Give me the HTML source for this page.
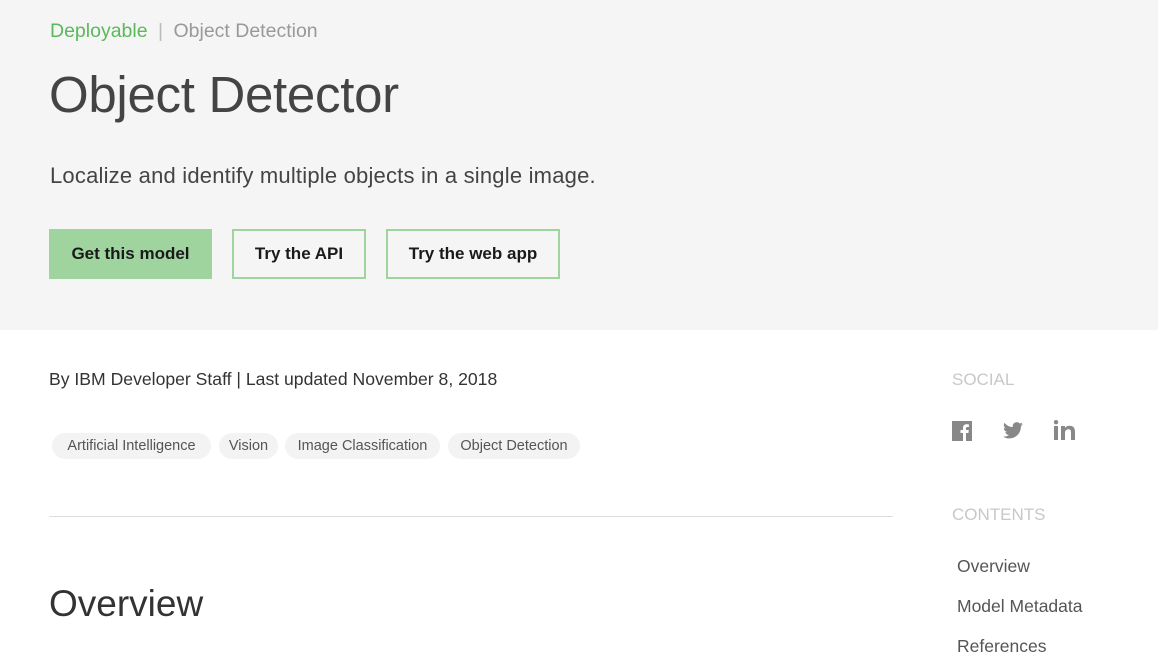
<!DOCTYPE html>
<html><head><meta charset="utf-8"><style>
*{margin:0;padding:0;box-sizing:border-box}
body{width:1158px;height:656px;overflow:hidden;background:#fff;font-family:"Liberation Sans",sans-serif;position:relative}
.hero{position:absolute;left:0;top:0;width:1158px;height:330px;background:#f5f5f5}
.a{position:absolute;white-space:nowrap}
.btn{position:absolute;top:229px;height:50px;font-weight:bold;font-size:17px;color:#1a1a1a;display:flex;align-items:center;justify-content:center}
.tag{position:absolute;top:433px;height:26px;border-radius:13px;background:#f3f3f3;font-size:14.5px;color:#555;display:flex;align-items:center;justify-content:center}
</style></head><body>
<div class="hero"></div>
<div class="a" style="left:50px;top:20px;font-size:19.5px;color:#5cb85c">Deployable <span style="color:#bbb;margin:0 5px">|</span> <span style="color:#999">Object Detection</span></div>
<div class="a" style="left:49px;top:65px;font-size:51px;color:#444;letter-spacing:-0.3px">Object Detector</div>
<div class="a" style="left:50px;top:163px;font-size:22px;color:#444;letter-spacing:0.2px">Localize and identify multiple objects in a single image.</div>
<div class="btn" style="left:49px;width:163px;background:#a0d49f">Get this model</div>
<div class="btn" style="left:232px;width:134px;border:2px solid #a0d49f">Try the API</div>
<div class="btn" style="left:386px;width:174px;border:2px solid #a0d49f">Try the web app</div>
<div class="a" style="left:49px;top:369px;font-size:17.6px;color:#333">By IBM Developer Staff | Last updated November 8, 2018</div>
<div class="tag" style="left:52px;width:159px">Artificial Intelligence</div>
<div class="tag" style="left:219px;width:59px">Vision</div>
<div class="tag" style="left:285px;width:155px">Image Classification</div>
<div class="tag" style="left:448px;width:132px">Object Detection</div>
<div class="a" style="left:49px;top:516px;width:844px;height:1px;background:#ddd"></div>
<div class="a" style="left:49px;top:583px;font-size:37px;color:#333;font-weight:300">Overview</div>
<div class="a" style="left:952px;top:370px;font-size:17px;color:#c8c8c8">SOCIAL</div>
<svg class="a" style="left:952px;top:421px" width="20" height="20" viewBox="0 0 20 20"><rect width="20" height="20" fill="#888"/><path d="M11 20V12H8.5V9H11V7c0-2.5 1.5-3.7 3.7-3.7 1 0 1.9.1 2.2.1v2.6h-1.5c-1.2 0-1.4.6-1.4 1.4V9h2.8l-.4 3H14v8z" fill="#fff"/></svg>
<svg class="a" style="left:1003px;top:422px" width="20" height="17" viewBox="0 0 24 20"><path fill="#888" d="M24 2.4a10 10 0 0 1-2.8.8A5 5 0 0 0 23.3.4a10 10 0 0 1-3.1 1.2A4.9 4.9 0 0 0 11.8 6 14 14 0 0 1 1.7.9a4.9 4.9 0 0 0 1.5 6.6 4.9 4.9 0 0 1-2.2-.6v.1a4.9 4.9 0 0 0 3.9 4.8 4.9 4.9 0 0 1-2.2.1 4.9 4.9 0 0 0 4.6 3.4A9.9 9.9 0 0 1 0 17.3 14 14 0 0 0 7.5 19.5c9 0 14-7.5 14-14v-.6A10 10 0 0 0 24 2.4z"/></svg>
<svg class="a" style="left:1054px;top:420px" width="21" height="20" viewBox="0 0 21 20"><rect x="0" y="6" width="4" height="14" fill="#888"/><circle cx="2" cy="2.2" r="2.2" fill="#888"/><path d="M7 6h4v2c.8-1.4 2.3-2.3 4.5-2.3 3.6 0 5.5 2 5.5 6V20h-4v-7.5c0-2-.7-3.2-2.5-3.2S11 10.6 11 12.6V20H7z" fill="#888"/></svg>
<div class="a" style="left:952px;top:505px;font-size:17px;color:#c8c8c8">CONTENTS</div>
<div class="a" style="left:957px;top:556px;font-size:17.5px;color:#555">Overview</div>
<div class="a" style="left:957px;top:596px;font-size:17.5px;color:#555">Model Metadata</div>
<div class="a" style="left:957px;top:636px;font-size:17.5px;color:#555">References</div>
</body></html>
